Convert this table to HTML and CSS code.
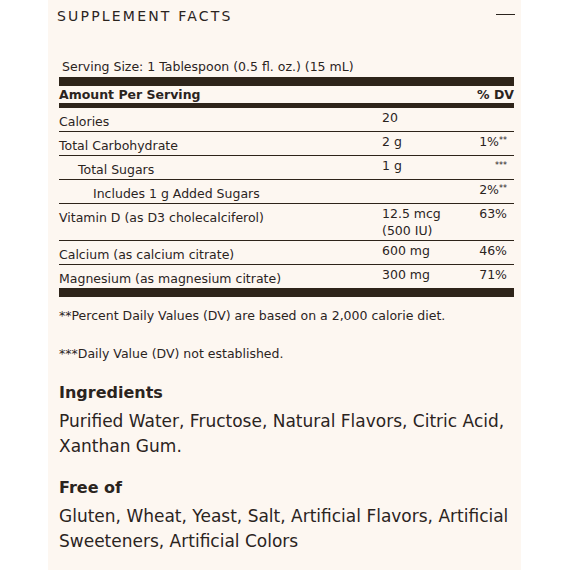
FILE: index.html
```html
<!DOCTYPE html>
<html>
<head>
<meta charset="utf-8">
<link rel="stylesheet" href="styles.css">
</head>
<body>
<div class="panel">
  <div class="title-row">
    <h2 class="title">SUPPLEMENT FACTS</h2>
    <span class="collapse"></span>
  </div>
  <div class="facts">
    <p class="serving">Serving Size: 1 Tablespoon (0.5 fl. oz.) (15 mL)</p>
    <table class="table">
      <thead>
        <tr class="head"><th class="label">Amount Per Serving</th><th class="amt"></th><th class="dv">% DV</th></tr>
      </thead>
      <tbody>
        <tr><td class="label">Calories</td><td class="amt">20</td><td class="dv"></td></tr>
        <tr><td class="label">Total Carbohydrate</td><td class="amt">2 g</td><td class="dv">1%<sup>**</sup></td></tr>
        <tr><td class="label ind1">Total Sugars</td><td class="amt">1 g</td><td class="dv star">***</td></tr>
        <tr><td class="label ind2">Includes 1 g Added Sugars</td><td class="amt"></td><td class="dv">2%<sup>**</sup></td></tr>
        <tr class="tall"><td class="label">Vitamin D (as D3 cholecalciferol)</td><td class="amt">12.5 mcg<br>(500 IU)</td><td class="dv">63%</td></tr>
        <tr><td class="label">Calcium (as calcium citrate)</td><td class="amt">600 mg</td><td class="dv">46%</td></tr>
        <tr class="last"><td class="label">Magnesium (as magnesium citrate)</td><td class="amt">300 mg</td><td class="dv">71%</td></tr>
      </tbody>
    </table>
    <p class="note note1">**Percent Daily Values (DV) are based on a 2,000 calorie diet.</p>
    <p class="note note2">***Daily Value (DV) not established.</p>
  </div>
  <section class="block block-ing">
    <h3 class="block-title">Ingredients</h3>
    <p class="block-text">Purified Water, Fructose, Natural Flavors, Citric Acid, Xanthan Gum.</p>
  </section>
  <section class="block block-free">
    <h3 class="block-title">Free of</h3>
    <p class="block-text">Gluten, Wheat, Yeast, Salt, Artificial Flavors, Artificial Sweeteners, Artificial Colors</p>
  </section>
</div>
</body>
</html>
```
FILE: styles.css
```css
html, body {
  margin: 0;
  padding: 0;
  background: #ffffff;
}
body {
  font-family: "DejaVu Sans", "Noto Sans", sans-serif;
  color: #2b241e;
}
.panel {
  margin-left: 48px;
  width: 473px;
  height: 570px;
  background: #fdf7f1;
  padding: 0 7px 0 11px;
  box-sizing: border-box;
  overflow: hidden;
}
.title-row {
  display: flex;
  align-items: center;
  justify-content: space-between;
  height: 32px;
}
.title {
  margin: 0 0 0 -2px;
  font-size: 14px;
  font-weight: 400;
  letter-spacing: 2.2px;
  line-height: 20px;
}
.collapse {
  display: block;
  width: 19px;
  height: 1.5px;
  background: #2b241e;
  margin-right: -1px;
  margin-top: -3px;
}
.serving {
  margin: 26px 0 0 3px;
  font-size: 12.5px;
  line-height: 18px;
}
.table {
  width: 100%;
  border-collapse: collapse;
  border-top: 9px solid #2e241a;
  border-bottom: 9px solid #2e241a;
  margin-top: 1px;
  font-size: 12.5px;
}
.table th, .table td {
  padding: 0;
  vertical-align: top;
  line-height: 17px;
}
.head th {
  font-weight: 700;
  height: 17px;
  border-bottom: 5px solid #2e241a;
  font-size: 12.5px;
}
.label { text-align: left; }
.amt { width: 65px; text-align: left; }
.dv { width: 60px; text-align: right; }
tbody td { height: 23px; border-bottom: 1px solid #2e241a; }
.table tbody td.label { padding-top: 5px; height: 18px; }
.table tbody td.amt { padding-top: 1px; height: 22px; }
.table tbody td.dv { padding-top: 1px; height: 22px; padding-right: 7px; }
.table tbody tr.tall td.label { height: 31px; }
.table tbody tr.tall td.amt, .table tbody tr.tall td.dv { height: 35px; }
.table tbody tr.last td { border-bottom: none; }
.table td.ind1 { padding-left: 19px; }
.table td.ind2 { padding-left: 34px; }
.table sup { font-size: 8px; vertical-align: 3px; line-height: 0; }
.table td.star { font-size: 8px; padding-right: 12px; }
.note {
  margin: 0;
  font-size: 12.5px;
  line-height: 18px;
}
.note1 { margin-top: 10px; }
.note2 { margin-top: 20px; }
.block { margin: 0; }
.block-ing { margin-top: 20px; }
.block-free { margin-top: 19px; }
.block-title {
  margin: 0;
  font-size: 16px;
  font-weight: 700;
  line-height: 20px;
}
.block-text {
  margin: 6px 0 0;
  font-size: 17px;
  line-height: 25px;
}
```
